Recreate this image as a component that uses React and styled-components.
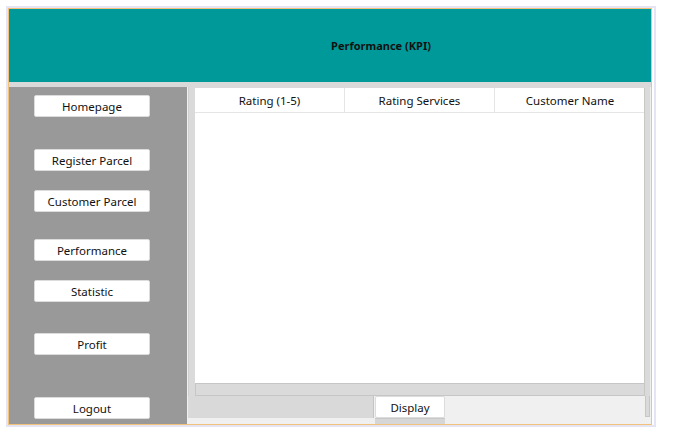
import React from "react";
import styled, { createGlobalStyle } from "styled-components";

const Global = createGlobalStyle`
  html, body { margin: 0; padding: 0; background: #ffffff; }
  body { font-family: "Noto Sans", "Open Sans", sans-serif; }
`;

const Outer = styled.div`
  margin: 6px 0 0 6px;
  width: 646px;
  border: 2px solid #e4e4f4;
  box-sizing: content-box;
`;

const Frame = styled.div`
  width: 642px;
  height: 415px;
  border: 1px solid #f2c27a;
  background: #f0f0f0;
  display: flex;
  flex-direction: column;
`;

const Header = styled.div`
  height: 73px;
  background: #009999;
  display: flex;
  align-items: center;
  justify-content: center;
  padding-left: 102px;
  font-family: "Noto Sans", sans-serif;
  font-weight: 700;
  font-size: 11px;
  color: #111;
`;

const Strip = styled.div`
  height: 5px;
  background: #d9d9d9;
`;

const Body = styled.div`
  flex: 1;
  display: flex;
  min-height: 0;
`;

const Sidebar = styled.div`
  width: 178px;
  background: #999999;
  display: flex;
  flex-direction: column;
  padding-left: 25px;
  box-sizing: border-box;
`;

const NavButton = styled.div`
  width: 116px;
  height: 22px;
  box-sizing: border-box;
  margin-top: ${(p) => p.$gap}px;
  background: #ffffff;
  border: 1px solid #dcdcdc;
  border-radius: 2px;
  display: flex;
  align-items: center;
  justify-content: center;
  font-size: 11.5px;
  color: #111;
`;

const Main = styled.div`
  flex: 1;
  display: flex;
  flex-direction: column;
`;

const ScrollPane = styled.div`
  margin-left: 1px;
  width: 462px;
  height: 309px;
  background: #dadada;
  border-left: 1px solid #cfcfcf;
  box-sizing: border-box;
  padding: 1px 5px 0 6px;
  display: flex;
  flex-direction: column;
`;

const Table = styled.div`
  height: 295px;
  background: #ffffff;
  border-right: 1px solid #c8c8c8;
  display: flex;
  flex-direction: column;
`;

const HeadRow = styled.div`
  height: 25px;
  display: grid;
  grid-template-columns: 150px 150px 150px;
  border-bottom: 1px solid #e5e5e5;
  box-sizing: border-box;
`;

const HeadCell = styled.div`
  display: flex;
  align-items: center;
  justify-content: center;
  font-size: 11.5px;
  color: #111;
  border-right: ${(p) => (p.$last ? "none" : "1px solid #e5e5e5")};
`;

const HScroll = styled.div`
  height: 13px;
  background: #dadada;
  border: 1px solid #c6c6c6;
  box-sizing: border-box;
`;

const Bottom = styled.div`
  flex: 1;
  display: flex;
  position: relative;
`;

const GrayBlock = styled.div`
  margin-left: 1px;
  width: 186px;
  height: 22px;
  background: #d9d9d9;
  border-right: 1px solid #c4c4c4;
  box-sizing: border-box;
`;

const DisplayCol = styled.div`
  width: 70px;
  display: flex;
  flex-direction: column;
  margin-left: 1px;
`;

const DisplayButton = styled.div`
  height: 22px;
  background: #ffffff;
  border: 1px solid #dcdcdc;
  border-radius: 2px;
  box-sizing: border-box;
  display: flex;
  align-items: center;
  justify-content: center;
  font-size: 11.5px;
  color: #111;
`;

const UnderBar = styled.div`
  height: 6px;
  background: #d6d6d6;
  border-top: 1px solid #c8c8c8;
  box-sizing: border-box;
`;

const Spacer = styled.div`
  flex: 1;
`;

const RightStrip = styled.div`
  width: 5px;
  height: 21px;
  margin-right: 1px;
  background: #dadada;
  border: 1px solid #c6c6c6;
  border-top: none;
  box-sizing: border-box;
`;

const navItems = [
  { label: "Homepage", gap: 8 },
  { label: "Register Parcel", gap: 32 },
  { label: "Customer Parcel", gap: 19 },
  { label: "Performance", gap: 27 },
  { label: "Statistic", gap: 19 },
  { label: "Profit", gap: 31 },
  { label: "Logout", gap: 42 },
];

const columns = ["Rating (1-5)", "Rating Services", "Customer Name"];

export default function App() {
  return (
    <>
      <Global />
      <Outer>
        <Frame>
          <Header>Performance (KPI)</Header>
          <Strip />
          <Body>
            <Sidebar>
              {navItems.map((n) => (
                <NavButton key={n.label} $gap={n.gap}>
                  {n.label}
                </NavButton>
              ))}
            </Sidebar>
            <Main>
              <ScrollPane>
                <Table>
                  <HeadRow>
                    {columns.map((c, i) => (
                      <HeadCell key={c} $last={i === columns.length - 1}>
                        {c}
                      </HeadCell>
                    ))}
                  </HeadRow>
                </Table>
                <HScroll />
              </ScrollPane>
              <Bottom>
                <GrayBlock />
                <DisplayCol>
                  <DisplayButton>Display</DisplayButton>
                  <UnderBar />
                </DisplayCol>
                <Spacer />
                <RightStrip />
              </Bottom>
            </Main>
          </Body>
        </Frame>
      </Outer>
    </>
  );
}
